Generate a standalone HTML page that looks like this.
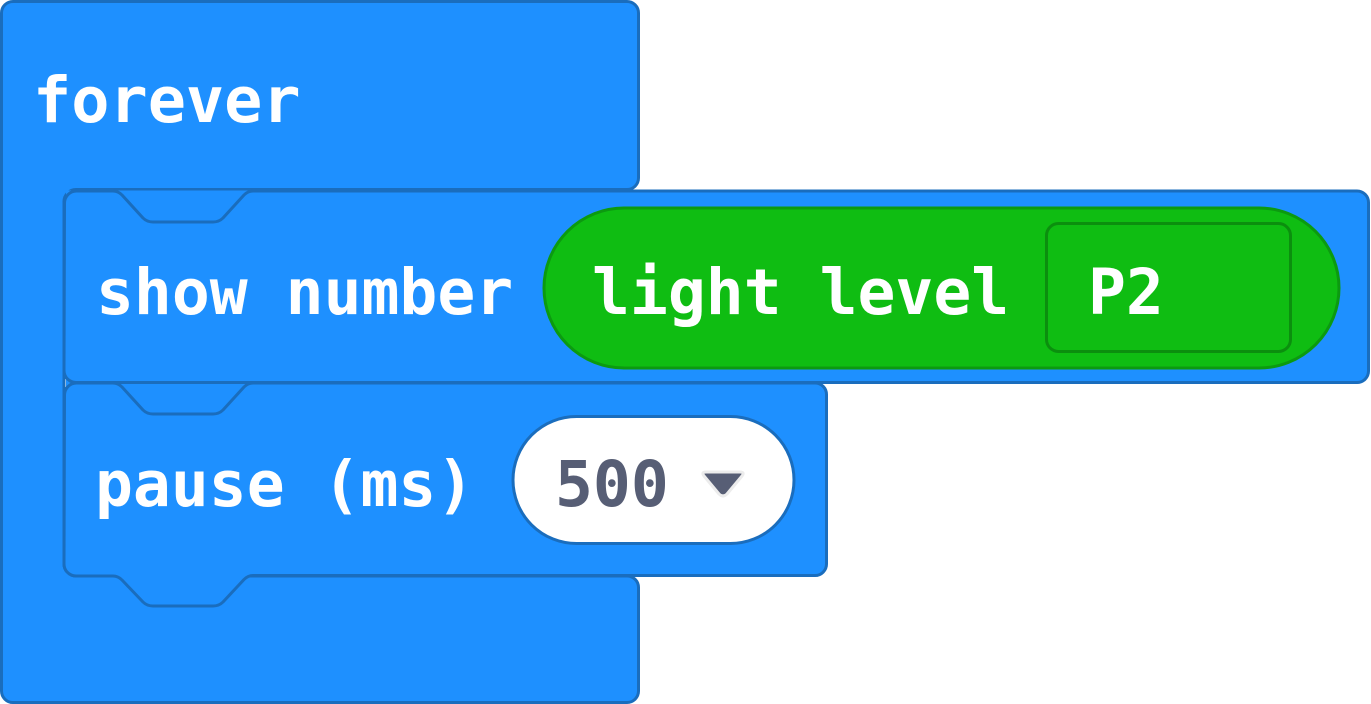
<!DOCTYPE html>
<html><head><style>html,body{margin:0;padding:0;background:#fff;width:1371px;height:704px;overflow:hidden}</style></head>
<body>
<svg width="1371" height="704" viewBox="0 0 1371 704" xmlns="http://www.w3.org/2000/svg" style="display:block">
<g stroke="#1a6dbd" stroke-width="3" fill="#1e90ff" stroke-linejoin="round">
<path d="M1.5,13 a11.5 11.5 0 0 1 11.5,-11.5 H627 a11.5 11.5 0 0 1 11.5,11.5 V178 a11.5 11.5 0 0 1 -11.5,11.5 H76 a12 12 0 0 0 -12 12 V564 a12 12 0 0 0 12,12 H627 a11.5 11.5 0 0 1 11.5,11.5 V691 a11.5 11.5 0 0 1 -11.5,11.5 H13 a11.5 11.5 0 0 1 -11.5,-11.5 Z"/>
<rect x="66" y="190.5" width="200" height="384" fill="#1e90ff" stroke="none"/>
<path d="M64.5,203 a12 12 0 0 1 12,-12 H113 q5,0 9,4 L143,218 q4,4 10,4 H213 q6,0 10,-4 L244,195 q4,-4 9,-4 H1357 a11.5 11.5 0 0 1 11.5,11.5 V371 a11.5 11.5 0 0 1 -11.5,11.5 H76 a12 12 0 0 1 -12,-12 Z"/>
<path d="M64.5,395 a12 12 0 0 1 12,-12 H113 q5,0 9,4 L143,410 q4,4 10,4 H213 q6,0 10,-4 L244,387 q4,-4 9,-4 H815 a11.5 11.5 0 0 1 11.5,11.5 V564 a11.5 11.5 0 0 1 -11.5,11.5 H253 q-5,0 -9,4 L223,602 q-4,4 -10,4 H153 q-6,0 -10,-4 L122,580 q-4,-4 -9,-4 H76 a12 12 0 0 1 -12,-12 Z"/>
</g>
<rect x="544" y="208" width="795" height="160" rx="80" fill="#0fbd12" stroke="#0c9a10" stroke-width="3"/>
<rect x="1046.5" y="223.5" width="244" height="128" rx="12" fill="#0fbd12" stroke="#0b8f0e" stroke-width="3"/>
<rect x="513" y="416.5" width="281" height="127" rx="63.5" fill="#fff" stroke="#1a6dbd" stroke-width="3"/>
<path d="M706,472 H740 Q745,472 742,476 L727,494 Q723,498 719,494 L704,476 Q701,472 706,472 Z" fill="#575e75" stroke="#ececec" stroke-width="3" stroke-linejoin="round"/>
<g font-family="'DejaVu Sans Mono','Liberation Mono',monospace" font-weight="bold" font-size="63" fill="#fff">
<text x="33" y="122" font-size="63.5">forever</text>
<text x="96" y="314">show number</text>
<text x="592" y="314">light level</text>
<text x="1088" y="314">P2</text>
<text x="95" y="506">pause (ms)</text>
<text x="555" y="506" fill="#575e75">500</text>
</g>
</svg>
</body></html>
